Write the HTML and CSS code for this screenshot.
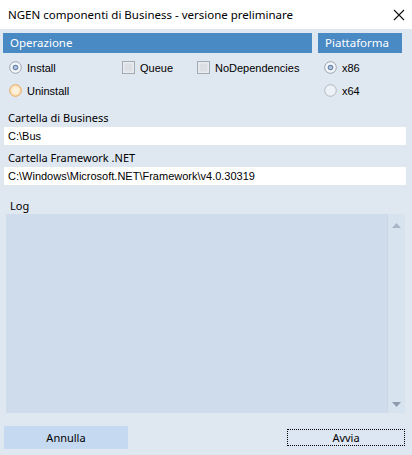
FILE: index.html
```html
<!DOCTYPE html>
<html>
<head>
<meta charset="utf-8">
<link rel="stylesheet" href="styles.css">
</head>
<body>
<div class="window">
  <div class="titlebar">
    <span class="title">NGEN componenti di Business - versione preliminare</span>
    <svg class="close" width="12" height="12" viewBox="0 0 12 12"><path d="M1 1L11 11M11 1L1 11" stroke="#111" stroke-width="1.1" fill="none"/></svg>
  </div>
  <div class="client">
    <div class="groups">
      <div class="group op">
        <div class="ghead">Operazione</div>
        <div class="opgrid">
          <label class="opt"><svg class="radio" width="13" height="13" viewBox="0 0 13 13"><circle cx="6.5" cy="6.5" r="5.8" fill="#f4f6f9" stroke="#9aa3ae"/><circle cx="6.5" cy="6.5" r="2.8" fill="#6b87b0"/><circle cx="6.5" cy="6.5" r="1.6" fill="#b8c9e0"/></svg>Install</label>
          <label class="opt c2"><svg class="check" width="13" height="13" viewBox="0 0 13 13"><rect x="0.5" y="0.5" width="12" height="12" fill="#e8ebef" stroke="#a4aab2"/><rect x="2.5" y="2.5" width="8" height="8" fill="#dcdfe4"/></svg>Queue</label>
          <label class="opt c3"><svg class="check" width="13" height="13" viewBox="0 0 13 13"><rect x="0.5" y="0.5" width="12" height="12" fill="#e8ebef" stroke="#a4aab2"/><rect x="2.5" y="2.5" width="8" height="8" fill="#dcdfe4"/></svg>NoDependencies</label>
          <label class="opt"><svg class="radio" width="13" height="13" viewBox="0 0 13 13"><circle cx="6.5" cy="6.5" r="5.8" fill="#fbe3bd" stroke="#e8a95a"/><circle cx="6.5" cy="6.5" r="3.6" fill="#fdf1dc"/></svg>Uninstall</label>
        </div>
      </div>
      <div class="group plat">
        <div class="ghead">Piattaforma</div>
        <label class="opt"><svg class="radio" width="13" height="13" viewBox="0 0 13 13"><circle cx="6.5" cy="6.5" r="5.8" fill="#f4f6f9" stroke="#9aa3ae"/><circle cx="6.5" cy="6.5" r="2.8" fill="#6b87b0"/><circle cx="6.5" cy="6.5" r="1.6" fill="#b8c9e0"/></svg>x86</label>
        <label class="opt"><svg class="radio" width="13" height="13" viewBox="0 0 13 13"><circle cx="6.5" cy="6.5" r="5.8" fill="#eef1f5" stroke="#b3b9c1"/></svg>x64</label>
      </div>
    </div>
    <div class="field first">
      <div class="flabel">Cartella di Business</div>
      <div class="tbox">C:\Bus</div>
    </div>
    <div class="field">
      <div class="flabel">Cartella Framework .NET</div>
      <div class="tbox">C:\Windows\Microsoft.NET\Framework\v4.0.30319</div>
    </div>
    <div class="loglabel">Log</div>
    <div class="log">
      <div class="logarea"></div>
      <div class="scroll">
        <svg width="9" height="5" viewBox="0 0 9 5"><path d="M0 5L4.5 0L9 5Z" fill="#a9b6c8"/></svg>
        <svg width="9" height="5" viewBox="0 0 9 5"><path d="M0 0L4.5 5L9 0Z" fill="#8e9bae"/></svg>
      </div>
    </div>
    <div class="buttons">
      <div class="btn cancel">Annulla</div>
      <div class="btn go"><span class="focus">Avvia</span></div>
    </div>
  </div>
</div>
</body>
</html>
```
FILE: styles.css
```css
html, body {
  margin: 0;
  padding: 0;
}
body {
  width: 412px;
  height: 455px;
  overflow: hidden;
  background: #dfe7f1;
}
.window {
  width: 412px;
  height: 455px;
  display: flex;
  flex-direction: column;
}
.titlebar {
  height: 29px;
  background: #ffffff;
  display: flex;
  align-items: center;
  justify-content: space-between;
  padding: 0 6px 0 8px;
  font-family: "Noto Sans", "Open Sans", sans-serif;
  font-size: 11.5px;
  color: #000;
}
.close {
  margin-right: 1px;
}
.client {
  flex: 1;
  background: #dfe7f1;
  padding: 4px 0 0 0;
  font-family: "Liberation Sans", Arial, sans-serif;
  font-size: 11px;
  color: #000;
  display: flex;
  flex-direction: column;
}
.groups {
  display: flex;
  gap: 6px;
  padding-left: 3px;
}
.ghead {
  height: 20px;
  background: #4a8ac4;
  color: #fff;
  font-family: "Noto Sans", "Open Sans", sans-serif;
  font-size: 11.5px;
  line-height: 20px;
  padding-left: 7px;
}
.op {
  width: 309px;
}
.plat {
  width: 84px;
}
.opgrid {
  display: grid;
  grid-template-columns: 113px 75px 1fr;
  padding-left: 6px;
  padding-top: 3px;
}
.opt {
  display: flex;
  align-items: center;
  height: 23px;
  gap: 5px;
}
.plat .opt {
  padding-left: 6px;
}
.plat .opt:first-of-type {
  margin-top: 3px;
}
.field {
  display: flex;
  flex-direction: column;
  padding: 0 6px 0 4px;
}
.field.first {
  margin-top: 8px;
}
.flabel {
  font-family: "Noto Sans", "Open Sans", sans-serif;
  font-size: 11px;
  height: 16px;
  line-height: 16px;
  padding-left: 4px;
}
.tbox {
  background: #ffffff;
  height: 18px;
  line-height: 18px;
  padding-left: 4px;
  margin-top: 1px;
  margin-bottom: 5px;
}
.loglabel {
  font-family: "Noto Sans", "Open Sans", sans-serif;
  font-size: 11px;
  margin-top: 7px;
  height: 17px;
  line-height: 17px;
  padding-left: 10px;
}
.log {
  margin: 0 7px 0 6px;
  height: 199px;
  background: #cfdcec;
  display: flex;
}
.logarea {
  flex: 1;
}
.scroll {
  width: 17px;
  background: #d8e3f0;
  border-left: 1px solid #cbd7e6;
  display: flex;
  flex-direction: column;
  justify-content: space-between;
  align-items: center;
  padding: 9px 0 6px 0;
}
.buttons {
  display: flex;
  justify-content: space-between;
  padding: 0 4px;
  margin-top: 13px;
}
.btn {
  width: 124px;
  height: 23px;
  display: flex;
  align-items: center;
  justify-content: center;
  font-family: "Noto Sans", "Open Sans", sans-serif;
  font-size: 11px;
}
.cancel {
  background: #c5d9f1;
}
.go {
  background: #dde7f3;
  padding: 3px;
  box-sizing: border-box;
}
.focus {
  flex: 1;
  align-self: stretch;
  border: 1px dotted #000;
  display: flex;
  align-items: center;
  justify-content: center;
}
```
